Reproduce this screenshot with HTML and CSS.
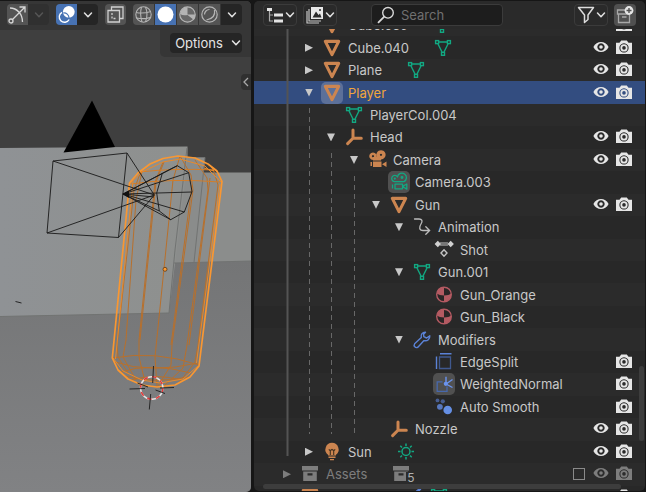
FILE: index.html
```html
<!DOCTYPE html>
<html lang="en">
<head>
<meta charset="utf-8">
<title>Outliner</title>
<link rel="stylesheet" href="styles.css">
</head>
<body>
<svg class="defs" aria-hidden="true">
  <symbol id="chev" viewBox="0 0 10 10"><path d="M1.500 3 5 6.800 8.500 3" fill="none" stroke="currentColor" stroke-width="1.500" stroke-linecap="round" stroke-linejoin="round"/></symbol>
  <symbol id="obj" viewBox="0 0 22 22"><path d="M4.300 4.400H17.700L11 17.600Z" fill="none" stroke="#cc8550" stroke-width="3.100" stroke-linejoin="round"/></symbol>
  <symbol id="mesh" viewBox="0 0 22 22"><g fill="none" stroke="#12a882" stroke-width="1.400"><rect x="3.600" y="3.600" width="3" height="3"/><rect x="15.400" y="3.600" width="3" height="3"/><rect x="9.500" y="15.300" width="3" height="3"/><path d="M7 5H15M6 7 10 15M16 7 12 15"/></g></symbol>
  <symbol id="empty" viewBox="0 0 22 22"><path d="M10 12.200V4M10 12.200H18.300M10 12.200 4.600 17.600" fill="none" stroke="#cc8550" stroke-width="3" stroke-linecap="round" stroke-linejoin="round"/></symbol>
  <symbol id="cam" viewBox="0 0 22 22"><g fill="#cc8550"><path fill-rule="evenodd" d="M7 3.500a3.700 3.700 0 1 0 .01 0ZM7 6.100a1.100 1.100 0 1 1-.01 0ZM15 1.200a4.600 4.600 0 1 0 .01 0ZM15 4.700a1.100 1.100 0 1 1-.01 0Z"/><path d="M7 8H15V11.500H7ZM7 12.500H15.500V18H7ZM4.500 13H6V17H4.500ZM16 15.200 20.500 12.500V18Z"/></g></symbol>
  <symbol id="camdata" viewBox="0 0 22 22"><g fill="none" stroke="#12a882" stroke-width="1.300" stroke-linejoin="round"><path d="M6.500 10.600a3.100 3.100 0 1 1 3-4.600 4.500 4.500 0 1 1 6.500 4.600Z"/><path d="M7 13.200H14.500V17.800H7ZM14.500 15.400 18.800 13V18.200ZM4.500 13.500V17.500"/><circle cx="6.800" cy="7.600" r=".5"/><circle cx="14" cy="6.500" r=".8"/></g></symbol>
  <symbol id="anim" viewBox="0 0 22 22"><path d="M3.500 3H8C11 3 12 5 10 8S8 14.500 12 14.500H18M14.800 10.800 18.600 14.500 14.800 18.200" fill="none" stroke="#bcbcbc" stroke-width="1.300" stroke-linecap="round"/></symbol>
  <symbol id="action" viewBox="0 0 22 22"><path d="M7 3H15V7H7Z" fill="#777"/><path d="M4.800 1.800 8 5 4.800 8.200 1.600 5ZM17.700 1.800 20.900 5 17.700 8.200 14.500 5Z" fill="#d0d0d0"/><path d="M11 10.800 14 14 11 17.200 8 14Z" fill="none" stroke="#c4c4c4" stroke-width="1.400"/></symbol>
  <symbol id="mat" viewBox="0 0 22 22"><circle cx="11" cy="10.500" r="7.300" fill="#2b2526" stroke="#b45a62" stroke-width="1.400"/><path d="M11 3.200V11.500C8 11.500 5.500 10.500 3.800 9.500A7.300 7.300 0 0 1 11 3.200ZM11 11.500C14 11.500 17 10.700 18.200 9.500A7.300 7.300 0 0 1 11 17.800Z" fill="#b45a62"/></symbol>
  <symbol id="wrench" viewBox="0 0 22 22"><path d="M14.500 3.200C11.500 3 9.500 5.500 10.300 8.600L3.600 14.800C2.200 17 4.500 19.500 6.900 18.200L13 11.600C16.500 12.300 19 10 18.800 6.800L15.600 9 12.800 7.600 12.600 5.200Z" fill="none" stroke="#5b82d6" stroke-width="1.400" stroke-linejoin="round"/></symbol>
  <symbol id="esplit" viewBox="0 0 22 22"><path d="M6.500 6H17.500V17.500H6.500Z" fill="none" stroke="#40598f" stroke-width="1.300"/><path d="M3.500 5.500V18M7 2.800H18.500" stroke="#5b82d6" stroke-width="1.400"/></symbol>
  <symbol id="wnorm" viewBox="0 0 22 22"><path d="M9.500 8.800H4.200V18.300H14V13.500" fill="none" stroke="#4768ad" stroke-width="1.300"/><path d="M13 11V3.800M13 11 19.500 6.500M13 11 19.500 14.500" stroke="#6a93ee" stroke-width="1.400"/><circle cx="12.800" cy="10.800" r="2.100" fill="#6a93ee"/></symbol>
  <symbol id="smooth" viewBox="0 0 22 22"><circle cx="14.700" cy="14" r="4.300" fill="#658fe4"/><circle cx="6.900" cy="10.800" r="2.900" fill="#5878be"/><circle cx="9.800" cy="5.300" r="2.100" fill="#475d91"/><circle cx="4.500" cy="4.400" r="1.900" fill="#475d91"/></symbol>
  <symbol id="bulb" viewBox="0 0 22 22"><path d="M11 1.800A6.700 6.700 0 0 0 7 13.800V14.500H15V13.800A6.700 6.700 0 0 0 11 1.800ZM7.500 15.600H14.500V17H7.500ZM9 18H13V19.300H9Z" fill="#cc8550"/><path d="M9.300 14V9.800L7.800 8.300M12.700 14V9.800L14.200 8.300M9.300 9.500 11 8.500 12.700 9.500" fill="none" stroke="#40301f" stroke-width="1.100"/></symbol>
  <symbol id="sun" viewBox="0 0 22 22"><g fill="none" stroke="#12a882" stroke-width="1.500"><circle cx="11" cy="10.500" r="4"/><path d="M11 2.500V5M11 16V18.500M3 10.500H5.500M16.500 10.500H19M5.300 4.800 7 6.500M15 14.500 16.700 16.200M5.300 16.200 7 14.500M15 6.500 16.700 4.800"/></g></symbol>
  <symbol id="coll" viewBox="0 0 22 22"><path fill-rule="evenodd" d="M3 3H19V7.500H3ZM4.200 8.500H17.800V18H4.200ZM8.500 10.200V12.400H13.500V10.200Z" fill="currentColor"/></symbol>
  <symbol id="eye" viewBox="0 1 16 16"><path fill-rule="evenodd" d="M.4 8C3.500 1.300 12.500 1.300 15.600 8 12.500 14.700 3.500 14.700 .4 8ZM8 4.300A3.700 3.700 0 1 0 8.010 4.300Z" fill="currentColor"/><circle cx="8" cy="8" r="1.800" fill="currentColor"/></symbol>
  <symbol id="photo" viewBox="0 1 16 16"><path fill-rule="evenodd" d="M0 3.800H3.500L5.200 1.600H10.800L12.500 3.800H16V15H0ZM8 4.300A4.600 4.600 0 1 0 8.010 4.300Z" fill="currentColor"/><circle cx="8" cy="8.900" r="2.700" fill="none" stroke="currentColor" stroke-width="1.800"/></symbol>
</svg>

<main class="app">
  <section class="viewport" aria-label="3D viewport">
    <svg class="scene" viewBox="0 0 252 492" preserveAspectRatio="xMinYMin slice" aria-hidden="true">
      <defs>
        <linearGradient id="floor" x1="0" y1="0" x2="0" y2="1"><stop offset="0" stop-color="#747576"/><stop offset="1" stop-color="#818284"/></linearGradient>
        <linearGradient id="wall" x1="0" y1="0" x2="1" y2="0"><stop offset="0" stop-color="#8f9295"/><stop offset="1" stop-color="#8e908e"/></linearGradient>
      </defs>
      <path fill="#3f3f3f" d="M0 0H252V492H0Z"/>
      <path fill="url(#floor)" d="M0 260H252V492H0Z"/>
      <path fill="#8b8d8c" d="M174 172.500H252V261L174 263Z"/>
      <path fill="#8a8c8b" d="M187 157.500H205L194 263H174Z"/>
      <path fill="url(#wall)" d="M0 148 187.500 146.500V160L169 313 0 316.500Z"/>
      <path fill="none" stroke="#717372" d="M187.500 157.500H205L194 262.500M187 148 175 250 169 313 0 316.500M174 263 252 261"/>
      <path fill="#000" d="M92 100.500 63.500 152.500 115 147Z"/>
      <g fill="none" stroke="#b8702c" stroke-width="1">
        <path d="M141 171 134 190 117 345 118 357 128 373M142 171 136 200 126 340 123 357 136 380M163 162 155 182 139 340 139 357 145 382M164 162 156 182 140 340M180 156 173 180 155 357 157 386M180 156 191 175 193 190 172 345 171 365 158 386M192 185 171 345M195 160 207 178 208 190 187 345 183 368 164 386M210 178 189 345M213 168 218 185 198 345 195 362 178 384"/>
        <path d="M131 184Q170 178 220 182M139 172Q175 168 214 170" stroke="#d47d28"/>
        <path d="M112.500 358Q155 350 199 365M115 362Q150 374 198 363M121 372Q150 362 191 373M124 376Q155 384 188 377M131 380Q155 373 181 380"/>
      </g>
      <path fill="none" stroke="#e98a2b" stroke-width="1" d="M133 181 115.500 359M220 184 196.500 363M129.500 184 142 172 163 162 180 159 205 166 221 182M204 168 214 171 210 165 219 174M113 358 123 371 142 380 160 383 183 379 198 366"/>
      <path fill="none" stroke="#f99732" stroke-width="1.700" stroke-linejoin="round" d="M129.500 183 138 173 150 164 163 158.500 178 156 195 158 208 164 217 171 222 181.500 199 366 190 377 175 385 157 387 142 385 128 379 118 370 112.300 358Z"/>
      <g fill="none" stroke="#181818" stroke-width=".9">
        <path d="M53 161 127 153 118.500 237.500 47 233ZM53 161 154.300 195 127 153M118.500 237.500 154.300 195 47 233"/>
        <path d="M177.300 165.700 188.700 172.700 192 191.700 184.300 212 170.700 219.700 159.300 211 156.700 193 162.300 173.300ZM123.300 194 177.300 165.700M123.300 194 188.700 172.700M123.300 194 192 192M123.300 194 184.300 212M123.300 194 170.700 219.700M123.300 194 159.300 211M123.300 194 162.300 173.300M123.300 194 154 197"/>
        <path d="M15.500 301.500 21.500 303"/>
      </g>
      <path fill="#111" d="M122 194 129 190.500V198Z"/>
      <circle cx="165" cy="269.300" r="2" fill="#ff9a30" stroke="#5c3a18" stroke-width=".8"/>
      <circle cx="151.700" cy="388" r="11.200" fill="none" stroke="#e4e4e4" stroke-width="1.500"/>
      <circle cx="151.700" cy="388" r="11.200" fill="none" stroke="#e23a3a" stroke-width="1.500" stroke-dasharray="4.400 4.400"/>
      <path stroke="#1c1c1c" stroke-width=".9" d="M153.500 366 152.700 383M150.700 394 149.300 409.500M129.500 389 145 388.500M160 388 174 387.500M137.500 383 148 387M155.500 390 165 393.500"/>
    </svg>
    <header class="vp-head">
      <div class="group">
        <button class="tool" aria-label="Gizmos"><svg viewBox="0 0 21 21"><g fill="none" stroke="#d6d6d6" stroke-width="1.300"><path d="M3 4C10 4 15.500 10 15.500 18M5 16 17.500 3.500M12.500 3H18V8.500"/><circle cx="4" cy="17" r="2"/></g></svg></button>
        <button class="drop dim" aria-label="Gizmo options"><svg><use href="#chev"/></svg></button>
      </div>
      <div class="group">
        <button class="tool on" aria-label="Overlays"><svg viewBox="0 0 21 21"><circle cx="12.800" cy="7.800" r="5.900" fill="#fff"/><path d="M6 8.300A5.300 5.300 0 1 0 13.200 15.500" fill="none" stroke="#fff" stroke-width="1.400"/><path d="M7.200 9A5 5 0 0 1 13 14" fill="none" stroke="#4772b3" stroke-width="1.200"/></svg></button>
        <button class="drop" aria-label="Overlay options"><svg><use href="#chev"/></svg></button>
      </div>
      <div class="group">
        <button class="tool" aria-label="X-ray"><svg viewBox="0 0 21 21"><g fill="none" stroke="#cfcfcf" stroke-width="1.300"><path d="M3 6.500H14.500V18H3Z"/><path d="M6.500 6V3H18V14.500H15"/><path d="M7 9V14.500H12" stroke-dasharray="2 1.500"/></g></svg></button>
      </div>
      <div class="group shading">
        <button class="tool" aria-label="Wireframe"><svg viewBox="0 0 21 21"><g fill="none" stroke="#b4b4b4" stroke-width="1.100"><circle cx="10.500" cy="10.500" r="7.700"/><path d="M3 8.500Q10 10 18 7.500M3.500 14Q11 15.500 17.500 13.500M8.500 3Q6.500 10 9 18M12.500 3Q15.500 10 12.500 18"/></g></svg></button>
        <button class="tool on" aria-label="Solid"><svg viewBox="0 0 21 21"><circle cx="10.500" cy="10.500" r="8" fill="#fff"/></svg></button>
        <button class="tool" aria-label="Material preview"><svg viewBox="0 0 21 21"><circle cx="10.500" cy="10.500" r="7.700" fill="#686868" stroke="#b4b4b4" stroke-width="1.200"/><path d="M10.500 2.800V11L17 16A7.700 7.700 0 0 0 18.200 10.500H10.500V3A7.700 7.700 0 0 0 3 10Q6 12 10.500 11Z" fill="#b4b4b4"/></svg></button>
        <button class="tool" aria-label="Rendered"><svg viewBox="0 0 21 21"><g fill="none" stroke="#b4b4b4" stroke-width="1.200"><circle cx="10.500" cy="10.500" r="7.700"/><path d="M5.500 10.500A5 5 0 0 1 10.500 5.500M15.500 6Q17 14 7.500 16"/></g></svg></button>
        <button class="drop" aria-label="Shading options"><svg><use href="#chev"/></svg></button>
      </div>
    </header>
    <div class="opt-wrap"><button class="options">Options <svg><use href="#chev"/></svg></button></div>
    <button class="side-tab" aria-label="Show sidebar"><svg viewBox="0 0 8 12"><path d="M6 2 2 6 6 10" fill="none" stroke="#a8a8a8" stroke-width="1.300"/></svg></button>
  </section>

  <section class="outliner" aria-label="Outliner">
    <header class="ol-head">
      <button class="hbtn" aria-label="Editor type"><svg viewBox="0 0 18 18"><path d="M1 2H6V5H1ZM8 7.500H17V10.500H8ZM8 13.500H17V16.500H8Z" fill="#e4e4e4"/><path d="M3.500 5V15H7M3.500 9H7" fill="none" stroke="#aaa" stroke-width="1.200"/></svg><svg class="c"><use href="#chev"/></svg></button>
      <button class="hbtn" aria-label="Display mode"><svg viewBox="0 0 18 18"><path d="M5 1H17V13H5Z" fill="#e8e8e8"/><path d="M6.500 11.500 10 5.500 12.500 9 14 7.500 15.500 11.500Z" fill="#2a2a2a"/><circle cx="14" cy="4" r="1" fill="#2a2a2a"/><path d="M3 3V15H15M1 5V17H13" fill="none" stroke="#c8c8c8" stroke-width="1.200"/></svg><svg class="c"><use href="#chev"/></svg></button>
      <label class="search"><svg viewBox="0 0 18 18"><circle cx="11" cy="6.800" r="5.300" fill="none" stroke="#d8d8d8" stroke-width="1.400"/><path d="M7 10.800 1.500 16.300" stroke="#d8d8d8" stroke-width="1.800" stroke-linecap="round"/></svg><input type="text" placeholder="Search" aria-label="Search"></label>
      <button class="hbtn filter" aria-label="Filter"><svg viewBox="0 0 18 18"><path d="M1.500 1.500H16.500L11 9V13.500L7.500 16.500V9Z" fill="none" stroke="#dcdcdc" stroke-width="1.500" stroke-linejoin="round"/></svg><svg class="c"><use href="#chev"/></svg></button>
      <button class="newcol" aria-label="New collection"><svg viewBox="0 0 22 22"><g fill="none" stroke="#a8a8a8" stroke-width="1.300"><path d="M11 6H3.500V10H16M4.500 10V18.500H15.500V11M8 13H12.500"/></g><circle cx="15" cy="6.500" r="4.400" fill="#e6e6e6"/><path d="M12.500 6.500H17.500M15 4V9" stroke="#505050" stroke-width="1.400"/></svg></button>
    </header>

    <div class="tree">
      <svg class="guides" aria-hidden="true"><path d="M33.500 0V427" stroke="#545454" stroke-width="2"/><path d="M55.500 79V405M77.500 124V405M100.500 147V405" stroke="#686868" stroke-dasharray="5 4"/></svg>
      <ul class="rows">
        <li class="row l0"><span class="arrow"></span><svg class="ic"><use href="#obj"/></svg><span class="name">Cube.039</span><svg class="ic data"><use href="#mesh"/></svg><span class="acts"><button aria-label="Hide"><svg><use href="#eye"/></svg></button><button aria-label="Render"><svg><use href="#photo"/></svg></button></span></li>
        <li class="row l0"><span class="arrow shut"></span><svg class="ic"><use href="#obj"/></svg><span class="name">Cube.040</span><svg class="ic data"><use href="#mesh"/></svg><span class="acts"><button aria-label="Hide"><svg><use href="#eye"/></svg></button><button aria-label="Render"><svg><use href="#photo"/></svg></button></span></li>
        <li class="row l0"><span class="arrow shut"></span><svg class="ic"><use href="#obj"/></svg><span class="name">Plane</span><svg class="ic data"><use href="#mesh"/></svg><span class="acts"><button aria-label="Hide"><svg><use href="#eye"/></svg></button><button aria-label="Render"><svg><use href="#photo"/></svg></button></span></li>
        <li class="row l0 selected"><span class="arrow open"></span><svg class="ic active"><use href="#obj"/></svg><span class="name">Player</span><span class="acts"><button aria-label="Hide"><svg><use href="#eye"/></svg></button><button aria-label="Render"><svg><use href="#photo"/></svg></button></span></li>
        <li class="row l1"><span class="arrow"></span><svg class="ic"><use href="#mesh"/></svg><span class="name">PlayerCol.004</span></li>
        <li class="row l1"><span class="arrow open"></span><svg class="ic"><use href="#empty"/></svg><span class="name">Head</span><span class="acts"><button aria-label="Hide"><svg><use href="#eye"/></svg></button><button aria-label="Render"><svg><use href="#photo"/></svg></button></span></li>
        <li class="row l2"><span class="arrow open"></span><svg class="ic"><use href="#cam"/></svg><span class="name">Camera</span><span class="acts"><button aria-label="Hide"><svg><use href="#eye"/></svg></button><button aria-label="Render"><svg><use href="#photo"/></svg></button></span></li>
        <li class="row l3"><span class="arrow"></span><svg class="ic active"><use href="#camdata"/></svg><span class="name">Camera.003</span></li>
        <li class="row l3"><span class="arrow open"></span><svg class="ic"><use href="#obj"/></svg><span class="name">Gun</span><span class="acts"><button aria-label="Hide"><svg><use href="#eye"/></svg></button><button aria-label="Render"><svg><use href="#photo"/></svg></button></span></li>
        <li class="row l4"><span class="arrow open"></span><svg class="ic"><use href="#anim"/></svg><span class="name">Animation</span></li>
        <li class="row l5"><span class="arrow"></span><svg class="ic"><use href="#action"/></svg><span class="name">Shot</span></li>
        <li class="row l4"><span class="arrow open"></span><svg class="ic"><use href="#mesh"/></svg><span class="name">Gun.001</span></li>
        <li class="row l5"><span class="arrow"></span><svg class="ic"><use href="#mat"/></svg><span class="name">Gun_Orange</span></li>
        <li class="row l5"><span class="arrow"></span><svg class="ic"><use href="#mat"/></svg><span class="name">Gun_Black</span></li>
        <li class="row l4"><span class="arrow open"></span><svg class="ic"><use href="#wrench"/></svg><span class="name">Modifiers</span></li>
        <li class="row l5"><span class="arrow"></span><svg class="ic"><use href="#esplit"/></svg><span class="name">EdgeSplit</span><span class="acts"><button aria-label="Render"><svg><use href="#photo"/></svg></button></span></li>
        <li class="row l5"><span class="arrow"></span><svg class="ic active"><use href="#wnorm"/></svg><span class="name">WeightedNormal</span><span class="acts"><button aria-label="Render"><svg><use href="#photo"/></svg></button></span></li>
        <li class="row l5"><span class="arrow"></span><svg class="ic"><use href="#smooth"/></svg><span class="name">Auto Smooth</span><span class="acts"><button aria-label="Render"><svg><use href="#photo"/></svg></button></span></li>
        <li class="row l3"><span class="arrow"></span><svg class="ic"><use href="#empty"/></svg><span class="name">Nozzle</span><span class="acts"><button aria-label="Hide"><svg><use href="#eye"/></svg></button><button aria-label="Render"><svg><use href="#photo"/></svg></button></span></li>
        <li class="row l0"><span class="arrow shut"></span><svg class="ic"><use href="#bulb"/></svg><span class="name">Sun</span><svg class="ic data"><use href="#sun"/></svg><span class="acts"><button aria-label="Hide"><svg><use href="#eye"/></svg></button><button aria-label="Render"><svg><use href="#photo"/></svg></button></span></li>
        <li class="row root off"><span class="arrow shut"></span><svg class="ic"><use href="#coll"/></svg><span class="name">Assets</span><span class="data count"><svg class="ic"><use href="#coll"/></svg><span class="badge">5</span></span><span class="acts"><input type="checkbox" aria-label="Exclude Assets"><button aria-label="Hide"><svg><use href="#eye"/></svg></button><button aria-label="Render"><svg><use href="#photo"/></svg></button></span></li>
        <li class="row root"><span class="arrow"></span><svg class="ic"><use href="#obj"/></svg><span class="gap"></span><svg class="ic"><use href="#wrench"/></svg><svg class="ic"><use href="#mesh"/></svg><span class="acts"><button aria-label="Hide"><svg><use href="#eye"/></svg></button><button aria-label="Render"><svg><use href="#photo"/></svg></button></span></li>
      </ul>
      <div class="vbar"></div>
      <div class="hbar"></div>
    </div>
  </section>
</main>
</body>
</html>
```
FILE: styles.css
```css
* { box-sizing: border-box; }
body {
  margin: 0;
  background: #161616;
  color: #c8c8c8;
  font: 13px/18px Inter, "Liberation Sans", sans-serif;
}
button, input { font: inherit; color: inherit; }
button { border: 0; padding: 0; background: none; display: flex; align-items: center; justify-content: center; }
.defs { position: absolute; width: 0; height: 0; }
.app { display: grid; grid-template-columns: 251fr 392fr; column-gap: 3px; height: 100vh; min-height: 400px; padding-top: 1px; }

.viewport { position: relative; display: flex; flex-direction: column; align-items: flex-end; overflow: hidden; border-radius: 0 5px 5px 0; background: #3f3f3f; }
.scene { position: absolute; top: -1px; left: 0; width: 100%; height: 100vh; }
.vp-head { position: relative; width: 100%; display: flex; justify-content: flex-end; gap: 7px; padding: 3px 9px 5px 0; background: #363636; }
.group { display: flex; border-radius: 4px; overflow: hidden; }
.shading { gap: 1px; }
.tool, .drop { width: 21px; height: 21px; background: #545454; }
.tool svg { width: 21px; height: 21px; }
.tool.on { background: #4772b3; }
.drop { background: #252525; color: #e0e0e0; }
.drop svg, .options svg, .hbtn .c { width: 10px; height: 10px; }
.drop.dim { background: #303030; color: #555; }
.opt-wrap { position: relative; padding: 3px 9px 4px 10px; background: #363636; border-radius: 0 0 0 5px; }
.options { width: 72px; height: 20px; gap: 8px; padding-left: 4px; background: #252525; border-radius: 4px; color: #e4e4e4; }
.side-tab { position: relative; width: 10px; height: 16px; margin-top: 17px; background: #303030; border-radius: 4px 0 0 4px; }
.side-tab svg { width: 8px; height: 12px; }

.outliner { display: flex; flex-direction: column; min-width: 0; margin: 0 1px 1px 0; overflow: hidden; border-radius: 5px; background: #282828; }
.ol-head { display: flex; align-items: center; gap: 6px; height: 28px; padding: 0 9px; background: #2a2a2a; }
.hbtn { height: 22px; width: 34px; gap: 1px; border: 1px solid #3b3b3b; border-radius: 4px; color: #e0e0e0; }
.hbtn svg { width: 18px; height: 18px; }
.search { display: flex; align-items: center; gap: 6px; flex: 0 1 132px; min-width: 0; height: 22px; margin: 0 auto 0 28px; padding: 0 5px; border: 1px solid #3b3b3b; border-radius: 4px; background: #1d1d1d; }
.search svg { flex: none; width: 18px; height: 18px; }
.search input { width: 100%; min-width: 0; padding: 0; border: 0; outline: 0; background: none; }
.search input::placeholder { color: #707070; opacity: 1; }
.newcol { width: 22px; height: 22px; border-radius: 4px; background: #505050; }
.newcol svg { width: 22px; height: 22px; }

.tree { position: relative; flex: 1; min-height: 0; overflow: hidden; }
.rows { list-style: none; margin: -15px 0 0; padding: 0; height: calc(100% + 32px); display: grid; grid-auto-rows: 1fr; }
.row { display: flex; align-items: center; min-height: 0; padding-right: 13px; }
.row:nth-child(odd) { background: #2b2b2b; }
.row.selected { background: #334d80; }
.root { padding-left: 27px; }
.l0 { padding-left: 49px; }
.l1 { padding-left: 71px; }
.l2 { padding-left: 94px; }
.l3 { padding-left: 116px; }
.l4 { padding-left: 139px; }
.l5 { padding-left: 161px; }
.arrow { flex: none; width: 12px; height: 10px; margin-right: 6px; }
.arrow::before { content: ""; display: block; width: 8px; height: 8px; margin: 1px 2px; background: #c8c8c8; }
.arrow:not(.open):not(.shut)::before { display: none; }
.shut::before { clip-path: polygon(0 0, 100% 50%, 0 100%); }
.open::before { clip-path: polygon(0 0, 100% 0, 50% 100%); }
.ic { flex: none; width: 22px; height: 22px; border-radius: 5px; }
.ic.active { background: #505050; }
.selected .ic.active { background: #5c7099; }
.name { margin-left: 5px; white-space: nowrap; }
.selected .name { color: #f0a63c; }
.data { margin-left: 23px; }
.count { position: relative; display: flex; }
.badge { position: absolute; left: 16px; top: 9px; padding-left: 1px; font-size: 12px; line-height: 12px; color: #b0b0b0; background: #2b2b2b; }
.gap { width: 85px; }
.acts { display: flex; align-items: center; gap: 7px; margin-left: auto; color: #e6e6e6; }
.acts svg { display: block; width: 16px; height: 16px; }
.acts input { appearance: none; width: 12px; height: 12px; margin: 0 1px 0 0; border: 1px solid #8a8a8a; }
.off, .off .acts { color: #7d7d7d; }
.off .arrow::before { background: #7d7d7d; }
.guides { position: absolute; inset: 0; width: 100%; height: 100%; pointer-events: none; }
.vbar { position: absolute; right: 1px; top: 73%; width: 5px; height: 75px; border-radius: 3px; background: #3d3d3d; }
.hbar { position: absolute; left: 9px; right: 24px; bottom: 2px; height: 5px; border-radius: 3px; background: #3d3d3d; }
```
